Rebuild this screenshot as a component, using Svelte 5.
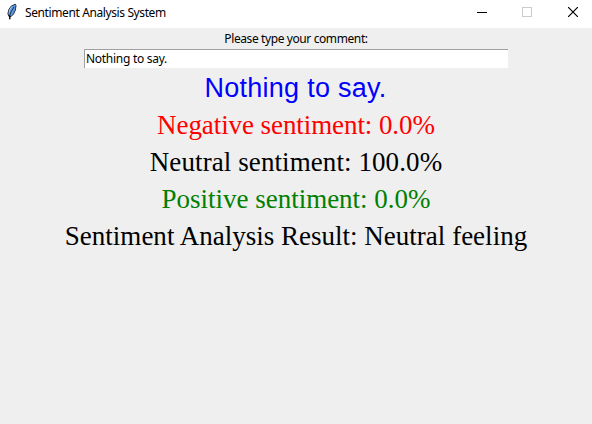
<script>
  let comment = $state('Nothing to say.');
  const scores = [
    { label: 'Negative sentiment', value: '0.0%', kind: 'negative' },
    { label: 'Neutral sentiment', value: '100.0%', kind: 'neutral' },
    { label: 'Positive sentiment', value: '0.0%', kind: 'positive' }
  ];
  const result = 'Neutral feeling';
</script>

<div class="window">
  <header>
    <svg class="feather" width="16" height="18" viewBox="0 0 16 18" aria-hidden="true">
      <path d="M13.3 1.2 14 2.5 13.4 7 11.6 11 9 13.6 6.7 13.2 5.9 10.5 6.9 6.5 9.3 3Z" fill="#5a97e6" stroke="#1b2026" stroke-width=".9" />
      <path d="M9.8 3.6 7.8 6.8 7.2 9.6" fill="none" stroke="#a9c6e8" stroke-width="1" />
      <path d="M12 4 9.2 8.6 7.6 13 7.8 16.2" fill="none" stroke="#16191d" stroke-width=".8" />
      <path d="M7.8 12.5V16.3" stroke="#000" stroke-width="1.2" />
    </svg>
    <h1>Sentiment Analysis System</h1>
    <div class="controls">
      <button aria-label="Minimize"><svg width="10" height="10" shape-rendering="crispEdges"><path d="M0 5.5H10" stroke="#000" /></svg></button>
      <button aria-label="Maximize" disabled><svg width="10" height="10" shape-rendering="crispEdges"><path d="M.5 .5H9.5V9.5H.5Z" fill="none" stroke="#ccc" /></svg></button>
      <button aria-label="Close"><svg width="10" height="10"><path d="M0 0 10 10M10 0 0 10" stroke="#000" stroke-width="1.2" /></svg></button>
    </div>
  </header>
  <main>
    <label for="comment">Please type your comment:</label>
    <input id="comment" bind:value={comment} spellcheck="false" />
    <p class="echo">{comment}</p>
    {#each scores as s}
      <p class={s.kind}>{s.label}: {s.value}</p>
    {/each}
    <p class="result">Sentiment Analysis Result: {result}</p>
  </main>
</div>

<style>
  .window {
    height: 424px;
    background: #efefef;
    color: #000;
    overflow: hidden;
    font: 12px/20px "Noto Sans", "Open Sans", sans-serif;
  }
  header {
    display: flex;
    height: 28px;
    background: #fff;
  }
  .feather { margin: 3px 0 0 2px; flex: none; }
  h1 {
    margin: 3px 0 0 7px;
    font-size: 12px;
    font-weight: 400;
    line-height: 20px;
    letter-spacing: -0.39px;
    white-space: nowrap;
  }
  .controls { display: flex; margin-left: auto; height: 24px; margin-right: -4px; }
  button {
    display: flex;
    align-items: center;
    justify-content: center;
    width: 46px;
    padding: 0;
    border: 0;
    background: none;
  }
  button:first-child { padding-left: 2px; }
  main { display: flex; flex-direction: column; align-items: center; }
  label { height: 21px; line-height: 22px; letter-spacing: -0.4px; white-space: nowrap; }
  input {
    box-sizing: border-box;
    width: 424px;
    height: 19px;
    padding: 0 0 0 1px;
    border: 0 solid #a0a0a0;
    border-width: 1px 0 0 1px;
    border-radius: 0;
    outline: 0;
    background: #fff;
    color: #000;
    font: inherit;
    letter-spacing: -0.28px;
  }
  p {
    margin: 0;
    height: 37px;
    line-height: 38px;
    font-family: "Liberation Serif", serif;
    font-size: 27px;
    white-space: nowrap;
  }
  .echo { color: #00f; font-family: "Liberation Sans", sans-serif; height: 38px; line-height: 40px; letter-spacing: 0.25px; margin-right: 1px; }
  .negative { color: #f00; letter-spacing: -0.08px; }
  .neutral { letter-spacing: 0.09px; }
  .positive { color: #008000; }
  .result { letter-spacing: 0.01px; }
</style>
